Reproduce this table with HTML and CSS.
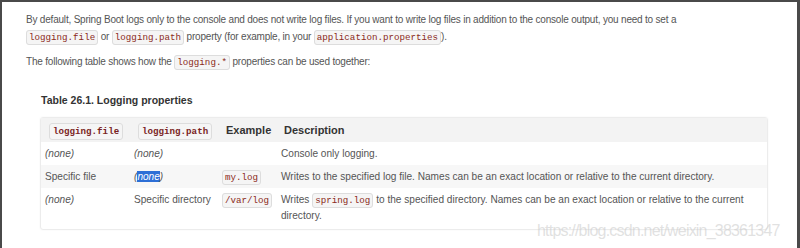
FILE: index.html
```html
<!DOCTYPE html>
<html>
<head>
<meta charset="utf-8">
<link rel="stylesheet" href="styles.css">
</head>
<body>
<div class="frame">
  <p class="para">By default, Spring Boot logs only to the console and does not write log files. If you want to write log files in addition to the console output, you need to set a <code>logging.file</code> or <code>logging.path</code> property (for example, in your <code>application.properties</code>).</p>
  <p class="para">The following table shows how the <code>logging.*</code> properties can be used together:</p>
  <div class="table-block">
    <div class="caption">Table 26.1. Logging properties</div>
    <table class="props">
      <thead>
        <tr>
          <th class="c1"><code class="hcode">logging.file</code></th>
          <th class="c2"><code class="hcode">logging.path</code></th>
          <th class="c3">Example</th>
          <th class="c4">Description</th>
        </tr>
      </thead>
      <tbody>
        <tr>
          <td><em>(none)</em></td>
          <td><em>(none)</em></td>
          <td></td>
          <td>Console only logging.</td>
        </tr>
        <tr class="alt">
          <td>Specific file</td>
          <td><em>(<span class="sel">none</span>)</em></td>
          <td><code>my.log</code></td>
          <td>Writes to the specified log file. Names can be an exact location or relative to the current directory.</td>
        </tr>
        <tr>
          <td><em>(none)</em></td>
          <td>Specific directory</td>
          <td><code>/var/log</code></td>
          <td>Writes <code>spring.log</code> to the specified directory. Names can be an exact location or relative to the current directory.</td>
        </tr>
      </tbody>
    </table>
  </div>
  <div class="watermark">https://blog.csdn.net/weixin_38361347</div>
</div>
</body>
</html>
```

FILE: styles.css
```css
html, body {
  margin: 0;
  padding: 0;
  background: #ffffff;
}
body {
  width: 800px;
  height: 248px;
  overflow: hidden;
  font-family: "Liberation Sans", Arial, sans-serif;
  font-size: 10px;
  color: #555555;
}
.frame {
  position: relative;
  box-sizing: border-box;
  width: 800px;
  height: 248px;
  border-top: 2px solid #4a4a4a;
  border-left: 2px solid #4a4a4a;
  border-right: 3px solid #4a4a4a;
  padding: 9px 0 0 24px;
}
.para {
  margin: 0 0 8px 0;
  line-height: 17px;
  width: 720px;
  letter-spacing: -0.2px;
}
code {
  font-family: "Liberation Mono", "DejaVu Sans Mono", monospace;
  font-size: 9.2px;
  line-height: 1;
  letter-spacing: 0;
  color: #8b2a1a;
  background: #f5f5f5;
  border: 1px solid #dddddd;
  border-radius: 3px;
  padding: 1px 2px;
}
.table-block {
  margin: 24px 0 0 14px;
  width: 728px;
}
.caption {
  font-weight: bold;
  color: #333333;
  font-size: 10.5px;
  margin-left: 1px;
  margin-bottom: 11px;
}
.props {
  width: 728px;
  table-layout: fixed;
  border-collapse: separate;
  border-spacing: 0;
  border: 1px solid #ececec;
  border-radius: 3px;
  box-shadow: 0 0 2px rgba(0,0,0,0.06);
  font-size: 10.1px;
}
.props th {
  box-sizing: border-box;
  background: #f3f3f3;
  text-align: left;
  font-weight: bold;
  font-size: 11px;
  color: #333333;
  height: 24px;
  padding: 0 0 0 8px;
}
.props th.c4 {
  padding-left: 7px;
}
.props td {
  padding: 4px 6px 2px 4px;
  line-height: 16px;
  vertical-align: top;
  height: 17px;
}
.props tbody tr.alt td {
  background: #f7f7f7;
}
.props tbody tr:last-child td {
  padding-bottom: 5px;
}
.c1 { width: 89px; }
.c2 { width: 88px; }
.c3 { width: 59px; }
.hcode {
  font-weight: bold;
  color: #7a1f1f;
  padding: 2px 3px;
}
em {
  font-style: italic;
}
.sel {
  background: #2d6fd6;
  color: #ffffff;
}
.watermark {
  position: absolute;
  left: 535px;
  top: 220px;
  font-family: "Liberation Sans", Arial, sans-serif;
  font-size: 16px;
  letter-spacing: -0.8px;
  color: rgba(200,200,200,0.55);
  white-space: nowrap;
}
```
